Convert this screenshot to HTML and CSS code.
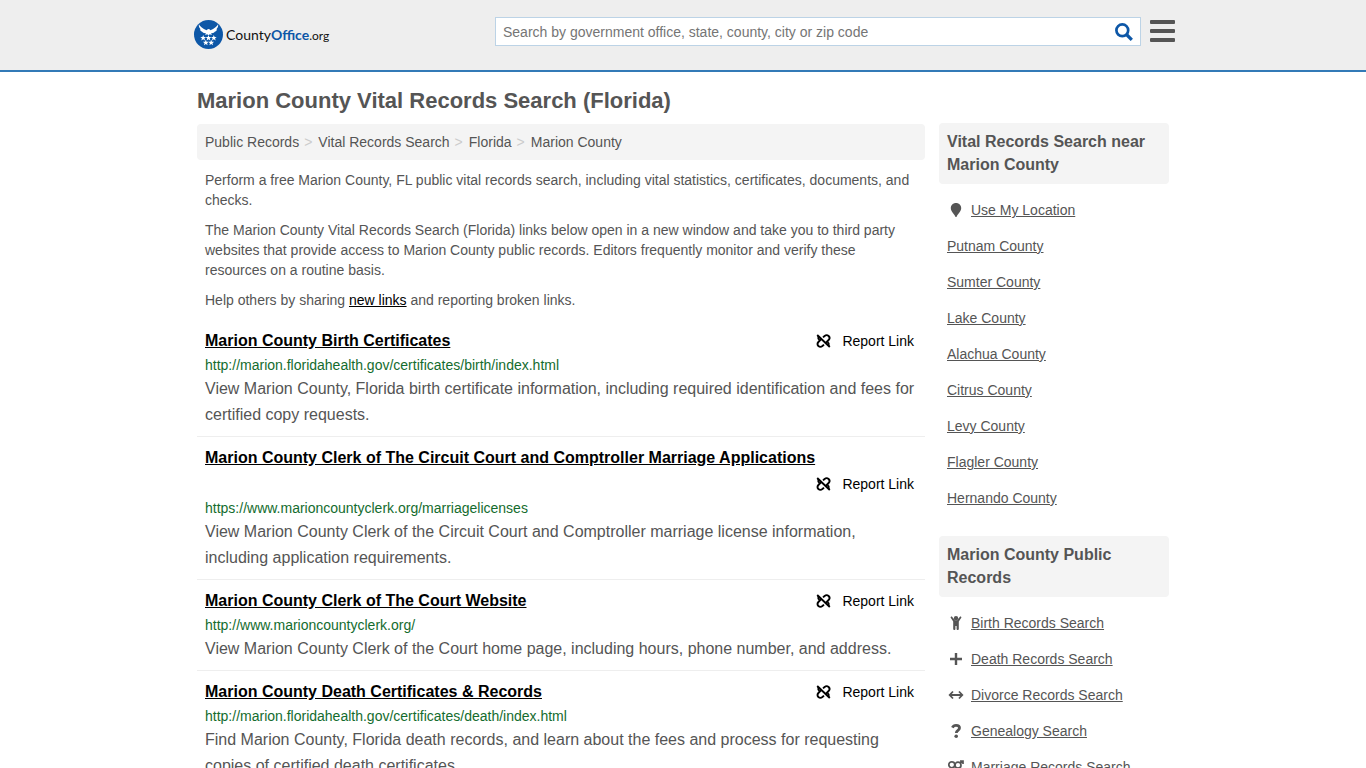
FILE: index.html
```html
<!DOCTYPE html>
<html lang="en">
<head>
  <meta charset="UTF-8">
  <meta name="viewport" content="width=device-width, initial-scale=1">
  <title>Marion County Vital Records Search (Florida)</title>
  <link rel="stylesheet" href="styles.css">
</head>
<body>
  <svg class="sprite" aria-hidden="true">
    <symbol id="unlink" viewBox="0 0 15 14">
      <g fill="none" stroke="currentColor" stroke-width="1.9">
        <path d="M1.200 1l12.600 12"/>
        <path d="M7 3.400L8.600 2c1.200-1 2.900-1 4 0 1.200 1.200 1.200 2.800 0 4L9.800 8.800"/>
        <path d="M8 10.600L6.400 12c-1.200 1-2.900 1-4 0-1.200-1.200-1.200-2.800 0-4l2.800-2.800"/>
        <path d="M2.400 2v2.600l1.200 1.200"/>
        <path d="M12.600 12V9.400l-1.200-1.200"/>
      </g>
    </symbol>
  </svg>

  <header class="header">
    <div class="container header-inner">
      <a class="logo" href="#">
        <svg viewBox="0 0 30 30" width="29" height="29" aria-hidden="true">
          <circle cx="15" cy="15" r="15" fill="#0d57a7"/>
          <path fill="#fff" d="M5 4.500c1.500 2.600 4 4.400 8 6.200l.8-.9c.6-.8 1.900-.8 2.600 0l.6.9c4-1.800 6.500-3.600 8-6.200.2 2.300-.6 4-2 5.300l1-.1c-.8 1.400-2 2.300-3.400 2.900l.8.2c-1.300.8-2.600 1-3.800 1l.9 1.700-2.200-.8-1.300 1.100-1.300-1.100-2.200.8.900-1.700c-1.200 0-2.500-.2-3.800-1l.8-.2C8 12 6.800 11.100 6 9.700l1 .1c-1.400-1.300-2.200-3-2-5.300z"/>
          <g fill="#fff">
            <path id="star" d="M9.500 15.500l.8 2 2.200.1-1.700 1.400.6 2.100-1.900-1.200-1.900 1.200.6-2.100-1.700-1.400 2.200-.1z"/>
            <use href="#star" x="5.500"/>
            <use href="#star" x="11"/>
            <use href="#star" x="2.700" y="5"/>
            <use href="#star" x="8.300" y="5"/>
          </g>
        </svg>
        <span class="logo-text">County<b>Office</b><small>.org</small></span>
      </a>
      <form class="search">
        <input type="text" class="search-input" aria-label="Search" placeholder="Search by government office, state, county, city or zip code">
        <button type="button" class="search-btn" aria-label="Search">
          <svg viewBox="0 0 18 18" width="18" height="18" aria-hidden="true">
            <g fill="none" stroke="#0d57a7"><circle cx="7.300" cy="7.300" r="5.900" stroke-width="2.700"/><path d="M11.500 11.500l5.300 5.300" stroke-width="3.200"/></g>
          </svg>
        </button>
      </form>
      <button type="button" class="menu-btn" aria-label="Menu">
        <span></span><span></span><span></span>
      </button>
    </div>
  </header>

  <div class="container page">
    <main class="main">
      <h1>Marion County Vital Records Search (Florida)</h1>
      <ol class="breadcrumb">
        <li><a href="#">Public Records</a></li>
        <li><a href="#">Vital Records Search</a></li>
        <li><a href="#">Florida</a></li>
        <li><a href="#">Marion County</a></li>
      </ol>
      <div class="intro">
        <p>Perform a free Marion County, FL public vital records search, including vital statistics, certificates, documents, and checks.</p>
        <p>The Marion County Vital Records Search (Florida) links below open in a new window and take you to third party websites that provide access to Marion County public records. Editors frequently monitor and verify these resources on a routine basis.</p>
        <p>Help others by sharing <a href="#">new links</a> and reporting broken links.</p>
      </div>

      <div class="results">
        <article class="result">
          <div class="result-head">
            <h2><a href="#">Marion County Birth Certificates</a></h2>
            <a class="report" href="#"><svg width="15" height="14" aria-hidden="true"><use href="#unlink"/></svg>Report Link</a>
          </div>
          <cite>http://marion.floridahealth.gov/certificates/birth/index.html</cite>
          <p>View Marion County, Florida birth certificate information, including required identification and fees for certified copy requests.</p>
        </article>
        <article class="result">
          <div class="result-head">
            <h2><a href="#">Marion County Clerk of The Circuit Court and Comptroller Marriage Applications</a></h2>
            <a class="report" href="#"><svg width="15" height="14" aria-hidden="true"><use href="#unlink"/></svg>Report Link</a>
          </div>
          <cite>https://www.marioncountyclerk.org/marriagelicenses</cite>
          <p>View Marion County Clerk of the Circuit Court and Comptroller marriage license information, including application requirements.</p>
        </article>
        <article class="result">
          <div class="result-head">
            <h2><a href="#">Marion County Clerk of The Court Website</a></h2>
            <a class="report" href="#"><svg width="15" height="14" aria-hidden="true"><use href="#unlink"/></svg>Report Link</a>
          </div>
          <cite>http://www.marioncountyclerk.org/</cite>
          <p>View Marion County Clerk of the Court home page, including hours, phone number, and address.</p>
        </article>
        <article class="result">
          <div class="result-head">
            <h2><a href="#">Marion County Death Certificates &amp; Records</a></h2>
            <a class="report" href="#"><svg width="15" height="14" aria-hidden="true"><use href="#unlink"/></svg>Report Link</a>
          </div>
          <cite>http://marion.floridahealth.gov/certificates/death/index.html</cite>
          <p>Find Marion County, Florida death records, and learn about the fees and process for requesting copies of certified death certificates.</p>
        </article>
      </div>
    </main>

    <aside class="sidebar">
      <section>
        <h3>Vital Records Search near Marion County</h3>
        <ul>
          <li><svg viewBox="0 0 18 14" width="18" height="14" aria-hidden="true"><path fill="currentColor" d="M9 0c3 0 5.200 2.300 5.200 5.100 0 3.200-2.700 5-4.600 8.600-.2.400-1 .4-1.200 0C6.500 10.100 3.800 8.300 3.800 5.100 3.800 2.300 6 0 9 0z"/></svg><a href="#">Use My Location</a></li>
          <li><a href="#">Putnam County</a></li>
          <li><a href="#">Sumter County</a></li>
          <li><a href="#">Lake County</a></li>
          <li><a href="#">Alachua County</a></li>
          <li><a href="#">Citrus County</a></li>
          <li><a href="#">Levy County</a></li>
          <li><a href="#">Flagler County</a></li>
          <li><a href="#">Hernando County</a></li>
        </ul>
      </section>
      <section>
        <h3>Marion County Public Records</h3>
        <ul>
          <li><svg viewBox="0 0 18 14" width="18" height="14" aria-hidden="true"><g fill="currentColor"><circle cx="9" cy="2.200" r="2.200"/><path d="M3.700 1.700c-.5-.8.8-1.700 1.400-.9L7.800 4.300h2.400L12.900.8c.6-.8 1.900.1 1.400.9L11.800 5.500V13c0 .6-.3 1-.9 1h-.4c-.6 0-.9-.4-.9-1v-3H8.400v3c0 .6-.3 1-.9 1h-.4c-.6 0-.9-.4-.9-1V5.500z"/></g></svg><a href="#">Birth Records Search</a></li>
          <li><svg viewBox="0 0 18 14" width="18" height="14" aria-hidden="true"><path d="M9 1v12M3 7h12" fill="none" stroke="currentColor" stroke-width="2.400"/></svg><a href="#">Death Records Search</a></li>
          <li><svg viewBox="0 0 18 14" width="18" height="14" aria-hidden="true"><path d="M3 7h12M6 3.500L2.700 7 6 10.500M12 3.500L15.300 7 12 10.500" fill="none" stroke="currentColor" stroke-width="1.800"/></svg><a href="#">Divorce Records Search</a></li>
          <li><svg viewBox="0 0 18 14" width="18" height="14" aria-hidden="true"><path d="M5.400 3.700C6.200 2 7.400 1.400 9 1.400c2.100 0 3.500 1.100 3.500 2.600 0 2.500-3.200 2.200-3.200 5" fill="none" stroke="currentColor" stroke-width="2.800"/><circle cx="9.200" cy="12.200" r="1.800" fill="currentColor"/></svg><a href="#">Genealogy Search</a></li>
          <li><svg viewBox="0 0 18 14" width="18" height="14" aria-hidden="true"><g fill="none" stroke="currentColor" stroke-width="1.700"><circle cx="4.800" cy="4.800" r="3"/><circle cx="11" cy="5.200" r="3"/><path d="M4.800 8v5.500M2.800 11h4M13.200 3.200L15.800 1M13 1h3v3"/></g></svg><a href="#">Marriage Records Search</a></li>
        </ul>
      </section>
    </aside>
  </div>
</body>
</html>
```

FILE: styles.css
```css
* {
  box-sizing: border-box;
}
body {
  margin: 0;
  font-family: "Liberation Sans", Arial, sans-serif;
  font-size: 14px;
  line-height: 20px;
  color: #555;
  background-color: #fff;
}
h1, h2, h3, p, ul, ol {
  margin: 0;
  padding: 0;
}
ul, ol {
  list-style: none;
}
.sprite {
  display: none;
}
.container {
  width: 100%;
  max-width: 988px;
  margin: 0 auto;
  padding: 0 8px;
}

/* header */
.header {
  height: 72px;
  background-color: #eee;
  border-bottom: 2px solid #337ab7;
}
.header-inner {
  display: flex;
  align-items: flex-start;
  padding: 17px 2px 0 5px;
}
.logo {
  display: flex;
  align-items: center;
  gap: 3px;
  margin-top: 3px;
  color: #111;
  text-decoration: none;
}
.logo-text {
  padding-top: 2px;
  font-family: Lato, sans-serif;
  font-size: 14px;
}
.logo-text b {
  color: #0d57a7;
}
.logo-text small {
  font-size: 12px;
}
.search {
  display: flex;
  width: 646px;
  height: 29px;
  margin: 0 9px 0 auto;
  background-color: #fff;
  border: 1px solid #bcd3e6;
}
.search-input {
  flex: 1;
  min-width: 0;
  padding: 0 7px;
  border: 0;
  outline: 0;
  font: inherit;
  color: #555;
}
.search-input::placeholder {
  color: #757575;
}
.search-btn {
  display: flex;
  align-items: center;
  padding: 0 7px;
  border: 0;
  background: none;
  cursor: pointer;
}
.menu-btn {
  display: grid;
  gap: 5px;
  width: 25px;
  margin-top: 3px;
  padding: 0;
  border: 0;
  background: none;
  cursor: pointer;
}
.menu-btn span {
  height: 4px;
  border-radius: 1px;
  background-color: #555;
}

/* layout */
.page {
  display: flex;
  gap: 14px;
}
.main {
  flex: 1;
  min-width: 0;
}
.sidebar {
  flex: 0 0 230px;
  padding-top: 51px;
}

h1 {
  padding: 17px 0 11px;
  font-size: 22px;
  line-height: 24px;
}
.breadcrumb {
  display: flex;
  flex-wrap: wrap;
  padding: 8px;
  background-color: #f4f4f4;
  border-radius: 4px;
}
.breadcrumb a {
  color: #555;
  text-decoration: none;
}
.breadcrumb li + li::before {
  content: ">";
  padding: 0 6px 0 5px;
  color: #ccc;
}
.intro {
  padding: 10px 8px 0;
}
.intro p {
  margin-bottom: 10px;
}
.intro a {
  color: #000;
}

/* results */
.result {
  padding: 8px;
  font-size: 16px;
  line-height: 26px;
}
.result + .result {
  border-top: 1px solid #eee;
}
.result-head {
  display: flex;
  flex-wrap: wrap;
  column-gap: 8px;
}
.result h2 {
  font-size: 16px;
}
.result h2 a {
  color: #000;
}
.report {
  display: flex;
  align-items: center;
  gap: 11px;
  margin-left: auto;
  padding-right: 3px;
  font-size: 14px;
  color: #000;
  text-decoration: none;
}
.result cite {
  display: block;
  font-size: 14px;
  font-style: normal;
  line-height: 22px;
  color: #146c2e;
}

/* sidebar */
.sidebar section {
  margin-bottom: 20px;
}
.sidebar h3 {
  margin-bottom: 8px;
  padding: 7px 8px 8px;
  font-size: 16px;
  line-height: 23px;
  background-color: #f4f4f4;
  border-radius: 4px;
}
.sidebar li {
  display: flex;
  align-items: center;
  gap: 6px;
  padding: 8px;
}
.sidebar a {
  color: #555;
}
```
